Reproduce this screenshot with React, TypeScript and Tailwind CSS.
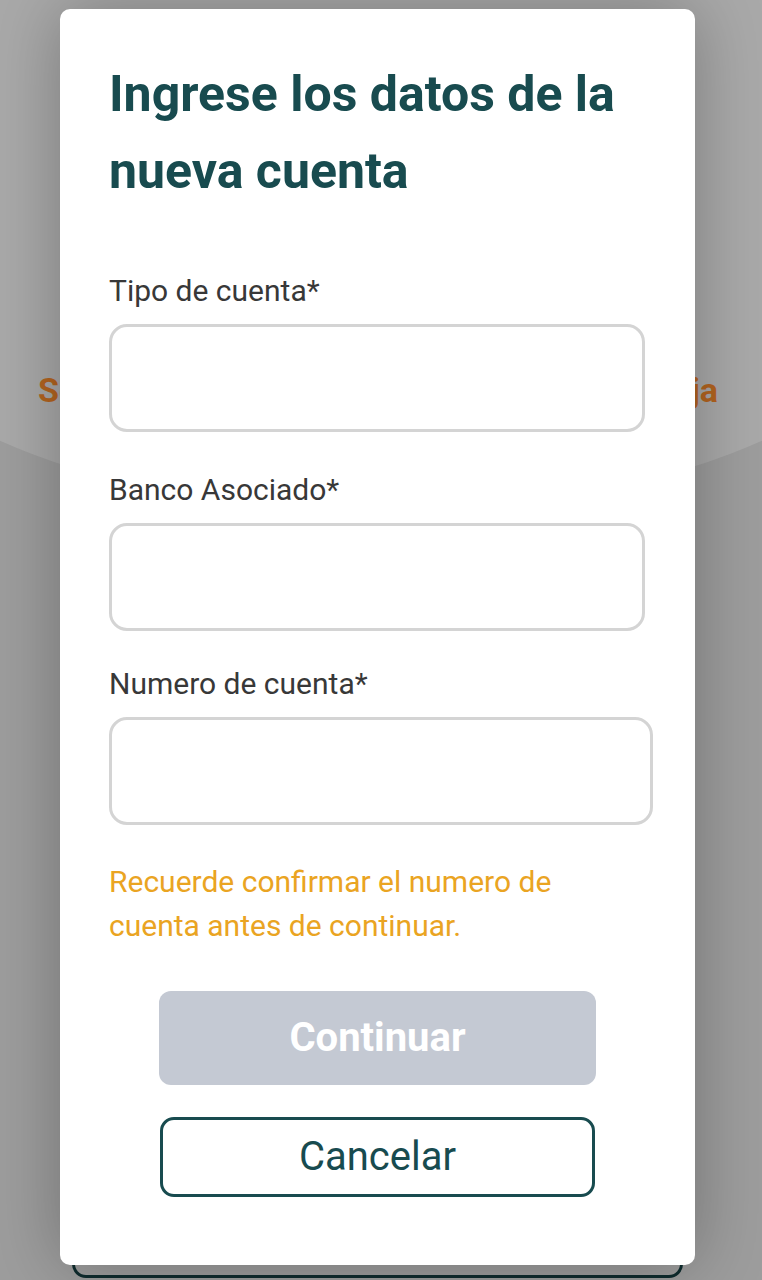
export default function App() {
  const fields = [
    { label: "Tipo de cuenta*", width: "w-[536px]", mt: "mt-[64px]" },
    { label: "Banco Asociado*", width: "w-[536px]", mt: "mt-[41px]" },
    { label: "Numero de cuenta*", width: "w-[544px]", mt: "mt-[36px]" },
  ];

  return (
    <div className="relative flex h-[1280px] w-[762px] flex-col overflow-hidden bg-[#9d9d9d] font-['Roboto',sans-serif]">
      {/* page behind the overlay */}
      <div className="-ml-[169px] h-[512px] w-[1100px] shrink-0 rounded-b-[50%] bg-[#a9a9a9]">
        <div className="mx-auto flex w-[762px] justify-between pt-[370px] pl-[38px] pr-[44px] text-[34px] font-bold leading-[40px] text-[#b3641f]">
          <span>Seleccione</span>
          <span>la</span>
          <span>cuenta</span>
          <span>de</span>
          <span>caja</span>
        </div>
      </div>
      <div className="mt-auto mb-[2px] ml-[72px] mr-[79px] h-[60px] shrink-0 rounded-[14px] border-[3px] border-[#0f2c2e]" />

      {/* modal */}
      <div className="absolute top-[9px] left-[60px] flex h-[1256px] w-[635px] flex-col rounded-[10px] bg-white pt-[47px] pl-[49px] shadow-[0_0_70px_rgba(0,0,0,0.28)]">
        <h1 className="text-[50px] font-bold leading-[77px] text-[#184b4f]">
          Ingrese los datos de la
          <br />
          nueva cuenta
        </h1>

        {fields.map((f) => (
          <div key={f.label} className={`flex flex-col ${f.mt}`}>
            <label className="text-[30px] leading-[34px] text-[#383838]">
              {f.label}
            </label>
            <div
              className={`mt-[16px] h-[108px] ${f.width} rounded-[18px] border-[3px] border-[#d4d4d4] bg-white`}
            />
          </div>
        ))}

        <p className="mt-[35px] w-[520px] text-[30px] leading-[44px] text-[#eaa422]">
          Recuerde confirmar el numero de
          <br />
          cuenta antes de continuar.
        </p>

        <div className="-ml-[49px] mt-[43px] flex flex-col items-center">
          <button className="flex h-[94px] w-[437px] items-center justify-center rounded-[12px] bg-[#c4c9d3] text-[40px] font-bold text-white">
            Continuar
          </button>
          <button className="mt-[32px] flex h-[80px] w-[435px] items-center justify-center rounded-[14px] border-[3px] border-[#184b4f] bg-white text-[40px] text-[#184b4f]">
            Cancelar
          </button>
        </div>
      </div>
    </div>
  );
}
